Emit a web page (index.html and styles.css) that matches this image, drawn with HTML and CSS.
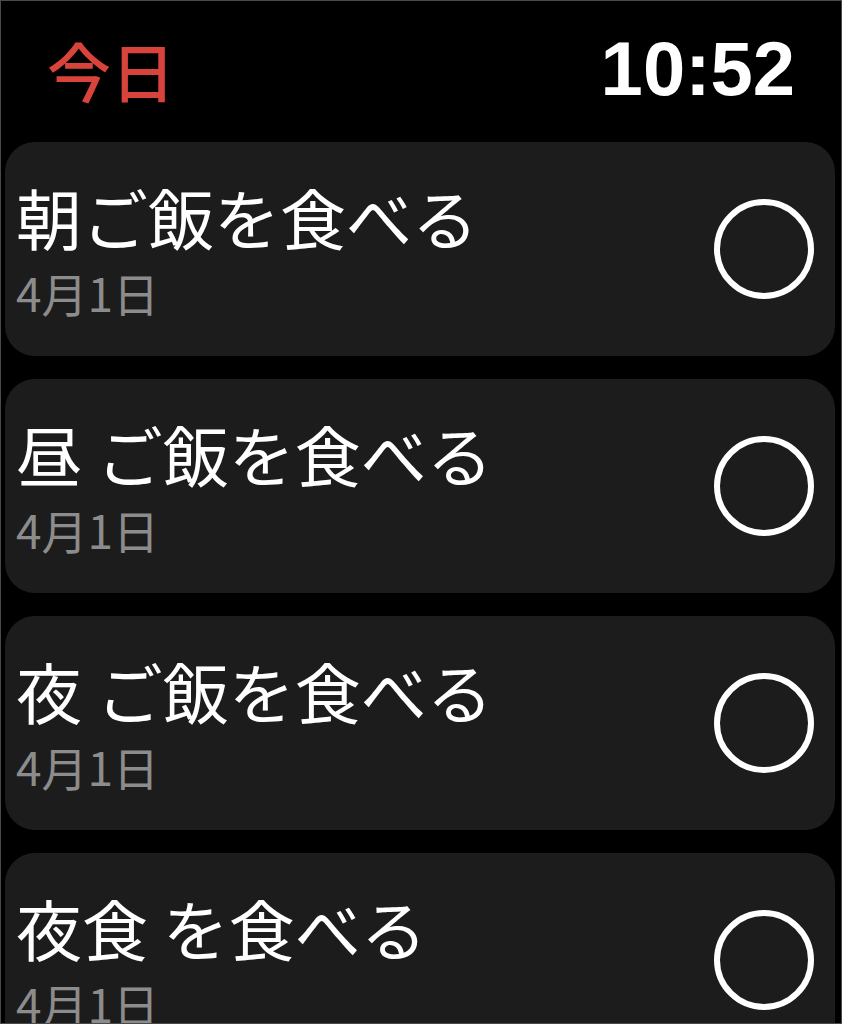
FILE: index.html
```html
<!DOCTYPE html>
<html lang="ja">
<head>
<meta charset="utf-8">
<link rel="stylesheet" href="styles.css">
</head>
<body>
<div class="screen">
  <header class="header">
    <div class="title">今日</div>
    <div class="time">10:52</div>
  </header>
  <div class="list">
    <div class="card">
      <div class="text">
        <div class="name">朝ご飯を食べる</div>
        <div class="date">4月1日</div>
      </div>
      <svg class="check" viewBox="0 0 104 104" width="104" height="104"><circle cx="52" cy="52" r="47" fill="none" stroke="#fff" stroke-width="6"/></svg>
    </div>
    <div class="card">
      <div class="text">
        <div class="name">昼 ご飯を食べる</div>
        <div class="date">4月1日</div>
      </div>
      <svg class="check" viewBox="0 0 104 104" width="104" height="104"><circle cx="52" cy="52" r="47" fill="none" stroke="#fff" stroke-width="6"/></svg>
    </div>
    <div class="card">
      <div class="text">
        <div class="name">夜 ご飯を食べる</div>
        <div class="date">4月1日</div>
      </div>
      <svg class="check" viewBox="0 0 104 104" width="104" height="104"><circle cx="52" cy="52" r="47" fill="none" stroke="#fff" stroke-width="6"/></svg>
    </div>
    <div class="card">
      <div class="text">
        <div class="name">夜食 を食べる</div>
        <div class="date">4月1日</div>
      </div>
      <svg class="check" viewBox="0 0 104 104" width="104" height="104"><circle cx="52" cy="52" r="47" fill="none" stroke="#fff" stroke-width="6"/></svg>
    </div>
  </div>
</div>
</body>
</html>
```

FILE: styles.css
```css
html, body {
  margin: 0;
  padding: 0;
  background: #000;
}
.screen {
  width: 842px;
  height: 1024px;
  box-sizing: border-box;
  border: 1px solid #4a4a4a;
  background: #000;
  overflow: hidden;
  font-family: "Noto Sans CJK JP", "Noto Sans", sans-serif;
}
.header {
  height: 141px;
  display: flex;
  justify-content: space-between;
  align-items: center;
  padding: 0 46px 0 46px;
  box-sizing: border-box;
}
.title {
  color: #d8443c;
  font-size: 64px;
  font-weight: 500;
  line-height: 1;
  margin-top: -6px;
}
.time {
  color: #fff;
  font-family: "Liberation Sans", Arial, sans-serif;
  font-weight: 700;
  font-size: 76px;
  line-height: 1;
  margin-top: -6px;
}
.list {
  display: flex;
  flex-direction: column;
  gap: 23px;
  margin: 0 6px 0 4px;
}
.card {
  flex: none;
  height: 214px;
  box-sizing: border-box;
  background: #1c1c1c;
  border-radius: 30px;
  display: flex;
  align-items: center;
  justify-content: space-between;
  padding: 0 19px 0 11px;
}
.text {
  display: flex;
  flex-direction: column;
  padding-bottom: 2px;
}
.name {
  color: #fff;
  font-size: 66px;
  line-height: 78px;
  white-space: pre;
}
.date {
  color: #8c8c8c;
  font-size: 46px;
  line-height: 54px;
  margin-top: 10px;
}
.check {
  display: block;
  flex: none;
}
```
